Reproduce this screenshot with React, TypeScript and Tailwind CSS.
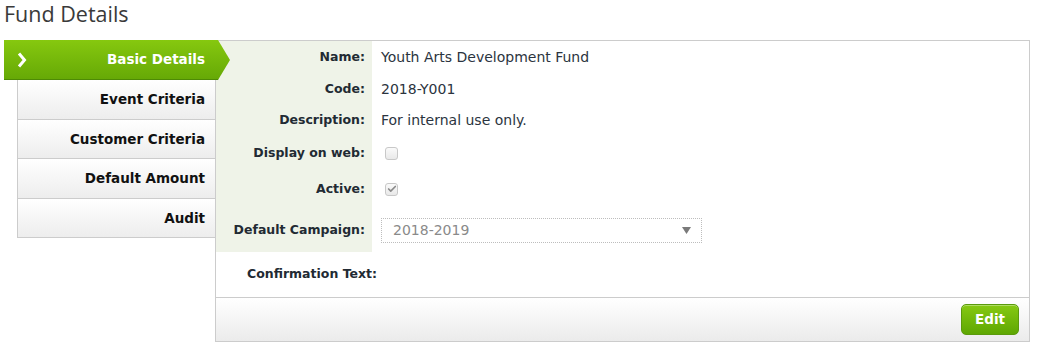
import { Check } from 'lucide-react';

const tabs = ['Event Criteria', 'Customer Criteria', 'Default Amount', 'Audit'];

const rows = [
  { label: 'Name:', value: 'Youth Arts Development Fund', h: 'h-[33px]' },
  { label: 'Code:', value: '2018-Y001', h: 'h-[31px]' },
  { label: 'Description:', value: 'For internal use only.', h: 'h-[31px]' },
  { label: 'Display on web:', box: 'off', h: 'h-[34px]' },
  { label: 'Active:', box: 'on', h: 'h-[38px]' },
  { label: 'Default Campaign:', select: '2018-2019', h: 'h-[44px]' },
];

function Box({ checked }: { checked: boolean }) {
  return (
    <span className="ml-[4px] flex w-[13px] h-[13px] items-center justify-center rounded-[3px] border border-[#c8c8c8] bg-gradient-to-b from-[#fafafa] to-[#e9e9e9]">
      {checked && <Check className="w-[10px] h-[10px] text-[#8a8a8a]" strokeWidth={4} />}
    </span>
  );
}

export default function App() {
  return (
    <div className="w-[1039px] h-[352px] bg-white font-['DejaVu_Sans',sans-serif] text-[14px] text-[#2b3440]">
      {/* Title */}
      <h1 className="h-[40px] pl-[4px] font-['Open_Sans',sans-serif] text-[21.5px] leading-[27px] text-[#3a3a3a]">Fund Details</h1>

      <div className="flex">
        {/* Tabs */}
        <div className="w-[215px] pl-[4px] flex flex-col">
          <div className="relative z-10 w-[226px] h-[40px] flex items-center bg-gradient-to-b from-[#86c80f] to-[#66a906] border-b border-[#4e8a05] [clip-path:polygon(0_0,214px_0,226px_50%,214px_100%,0_100%)]">
            <svg className="ml-[13px]" width="10" height="16" viewBox="0 0 10 16">
              <path d="M2 1.5 L7.5 8 L2 14.5" fill="none" stroke="#ffffff" strokeWidth="3" strokeLinejoin="miter" />
            </svg>
            <span className="ml-auto mr-[25px] font-bold text-[13.5px] text-white">Basic Details</span>
          </div>
          {tabs.map((t) => (
            <div
              key={t}
              className="ml-[13px] w-[199px] h-[39.5px] border-x border-b border-[#cccccc] bg-gradient-to-b from-white to-[#ededed] flex items-center justify-end pr-[10px] font-bold text-[13.5px] text-[#111]"
            >
              {t}
            </div>
          ))}
        </div>

        {/* Panel */}
        <div className="w-[815px] h-[302px] border border-[#cccccc] flex flex-col">
          <div className="flex-1">
            {rows.map((r) => (
              <div key={r.label} className={`flex ${r.h}`}>
                <div className="w-[156px] bg-[#eff3e8] flex items-center justify-end pr-[7px] font-bold text-[12.5px] text-[#222a33]">{r.label}</div>
                <div className="flex-1 flex items-center pl-[9px]">
                  {r.value && <span>{r.value}</span>}
                  {r.box && <Box checked={r.box === 'on'} />}
                  {r.select && (
                    <div className="w-[321px] h-[25px] border border-dotted border-[#bdbdbd] flex items-center pl-[11px] pr-[10px] text-[#8a8a8a]">
                      <span>{r.select}</span>
                      <svg className="ml-auto" width="9" height="7" viewBox="0 0 9 7">
                        <path d="M0 0 H9 L4.5 7 Z" fill="#7a7a7a" />
                      </svg>
                    </div>
                  )}
                </div>
              </div>
            ))}
            <div className="h-[45px] flex items-center pl-[31px] font-bold text-[12.5px] text-[#222a33]">Confirmation Text:</div>
          </div>

          {/* Footer */}
          <div className="h-[44px] border-t border-[#cccccc] bg-gradient-to-b from-white to-[#ebebeb] flex items-start justify-end pt-[6px] pr-[10px]">
            <button className="w-[58px] h-[31px] rounded-[5px] border border-[#5a9a0c] bg-gradient-to-b from-[#86c912] to-[#5ea703] font-bold text-[13.5px] text-white shadow-[inset_0_1px_0_rgba(255,255,255,0.35)]">
              Edit
            </button>
          </div>
        </div>
      </div>
    </div>
  );
}
